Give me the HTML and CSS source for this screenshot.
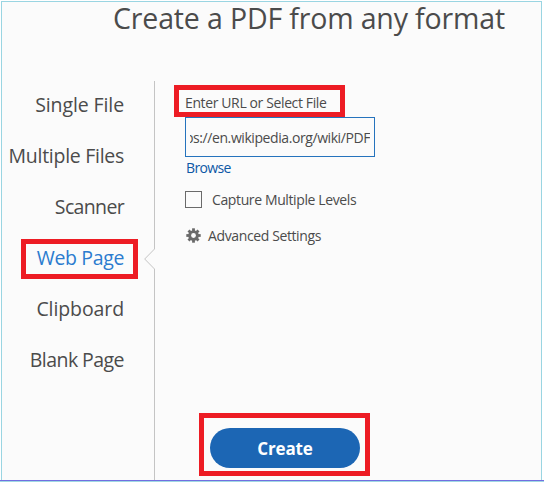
FILE: index.html
```html
<!DOCTYPE html>
<html lang="en">
<head>
<meta charset="utf-8">
<title>Create a PDF</title>
<link rel="stylesheet" href="styles.css">
</head>
<body>
<main class="window">
  <h1 class="title">Create a PDF from any format</h1>
  <div class="content">
    <nav class="sources">
      <a class="source single">Single File</a>
      <a class="source multiple">Multiple Files</a>
      <a class="source scanner">Scanner</a>
      <a class="source active">Web Page</a>
      <a class="source clipboard">Clipboard</a>
      <a class="source blank">Blank Page</a>
    </nav>
    <div class="divider">
      <span class="line-top"></span>
      <svg class="notch" width="11" height="20" viewBox="0 0 11 20"><path d="M10.5 0L.7 10l9.8 10" fill="none" stroke="#c4c4c4"/></svg>
      <span class="line-bottom"></span>
    </div>
    <section class="panel">
      <div class="label">Enter URL or Select File</div>
      <div class="url"><div class="url-clip"><span class="url-text">https://en.wikipedia.org/wiki/PDF</span></div></div>
      <a class="browse">Browse</a>
      <div class="capture"><span class="checkbox"></span><span>Capture Multiple Levels</span></div>
      <div class="advanced">
        <svg class="gear" width="15" height="15" viewBox="-7.5 -7.5 15 15">
          <g fill="#6a6a6a"><rect x="-1.4" y="-7.2" width="2.8" height="14.4"/><rect x="-7.2" y="-1.4" width="14.4" height="2.8"/><rect x="-1.4" y="-7.1" width="2.8" height="14.2" transform="rotate(45)"/><rect x="-1.4" y="-7.1" width="2.8" height="14.2" transform="rotate(-45)"/><circle r="5.3"/></g>
          <circle r="2.4" fill="#fbfbfb"/>
        </svg>
        <span>Advanced Settings</span>
      </div>
      <div class="action"><button class="create">Create</button></div>
    </section>
  </div>
</main>
</body>
</html>
```
FILE: styles.css
```css
* { box-sizing: border-box; }
body {
  margin: 0;
  width: 544px;
  height: 482px;
  overflow: hidden;
  background: #fff;
  color: #4b4b4b;
  font-family: "Open Sans", "Noto Sans", sans-serif;
  border-bottom: 1px solid #a0d8e4;
  padding-top: 1px;
}
.window {
  height: 480px;
  background: linear-gradient(#9ad5e2, #9ad5e2) 1px 0 / 541px 1px no-repeat,
    linear-gradient(#9ad5e2, #9ad5e2) 1px 0 / 1px 480px no-repeat,
    linear-gradient(#9ad5e2, #9ad5e2) 541px 0 / 1px 480px no-repeat,
    linear-gradient(#fbfbfb, #fbfbfb) 1px 0 / 541px 480px no-repeat;
  border-bottom: 1px solid #716fe0;
}
.title {
  margin: 0;
  height: 80px;
  padding-left: 113px;
  font-size: 28.5px;
  letter-spacing: -.15px;
  line-height: 34px;
  font-weight: 400;
  white-space: nowrap;
}
.content { display: flex; height: 399px; }
.sources { width: 144px; display: flex; flex-direction: column; align-items: flex-end; padding-right: 6px; }
.source {
  height: 51px;
  line-height: 47px;
  font-size: 19.5px;
  white-space: nowrap;
  padding-right: 14px;
}
.single { letter-spacing: -.1px; }
.multiple { letter-spacing: -.28px; }
.scanner { letter-spacing: -.65px; }
.clipboard { letter-spacing: -.1px; }
.blank { letter-spacing: -.55px; }
.source.active {
  width: 117px;
  height: 40px;
  margin: 5px 0 6px;
  border: 5px solid #ed1c24;
  padding-right: 9px;
  line-height: 28px;
  text-align: right;
  letter-spacing: -.35px;
  color: #2b7bcf;
}
.divider { width: 11px; display: flex; flex-direction: column; align-items: flex-end; }
.line-top { width: 1px; height: 168px; background: #c4c4c4; }
.line-bottom { width: 1px; flex: 1; background: #c4c4c4; }
.notch { display: block; }
.panel { padding-left: 19px; padding-top: 4px; font-size: 14px; letter-spacing: -.38px; white-space: nowrap; }
.label {
  width: 171px;
  height: 32px;
  border: 5px solid #ed1c24;
  padding-left: 6px;
  line-height: 26px;
}
.url {
  width: 190px;
  height: 40px;
  margin-left: 11px;
  border: 1px solid #2573bd;
  padding: 0 4px;
}
.url-clip { display: flex; justify-content: flex-end; overflow: hidden; line-height: 39px; height: 38px; letter-spacing: -.42px; }
.browse { display: block; margin-left: 12px; line-height: 22px; letter-spacing: -.65px; color: #0d58a5; }
.capture { display: flex; align-items: center; margin: 12px 0 0 11px; height: 17px; }
.checkbox { width: 17px; height: 17px; border: 1px solid #6a6a6a; margin-right: 10px; }
.advanced { display: flex; align-items: center; margin: 19px 0 0 12px; height: 16px; }
.gear { margin-right: 7px; }
.action {
  width: 171px;
  height: 63px;
  margin: 170px 0 0 25px;
  border: 5px solid #ed1c24;
  padding: 10px 0 0 6px;
}
.create {
  display: block;
  width: 150px;
  height: 40px;
  padding: 0;
  border: 0;
  border-radius: 20px;
  background: #1c66b4;
  color: #fff;
  font: 700 17px/42px "Open Sans", "Noto Sans", sans-serif;
  letter-spacing: -.15px;
}
```
